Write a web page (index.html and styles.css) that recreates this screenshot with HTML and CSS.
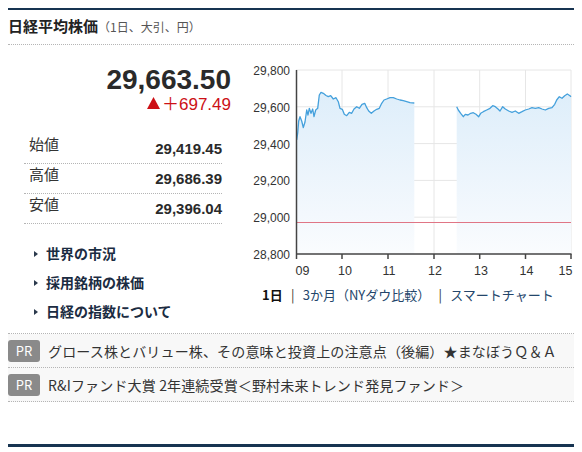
FILE: index.html
```html
<!DOCTYPE html>
<html lang="ja">
<head>
<meta charset="utf-8">
<title>日経平均株価</title>
<link rel="stylesheet" href="styles.css">
</head>
<body>
<section class="panel">
  <header class="head">
    <h2 class="title">日経平均株価</h2><span class="sub">（1日、大引、円）</span>
  </header>
  <div class="main">
    <div class="left">
      <div class="price">29,663.50</div>
      <div class="change"><svg class="up" width="13" height="12" viewBox="0 0 13 12" aria-label="上昇"><path d="M6.5 0 L13 12 L0 12 Z"/></svg>＋697.49</div>
      <dl class="ohl">
        <div class="row"><dt>始値</dt><dd>29,419.45</dd></div>
        <div class="row"><dt>高値</dt><dd>29,686.39</dd></div>
        <div class="row"><dt>安値</dt><dd>29,396.04</dd></div>
      </dl>
      <ul class="links">
        <li><a href="#">世界の市況</a></li>
        <li><a href="#">採用銘柄の株価</a></li>
        <li><a href="#">日経の指数について</a></li>
      </ul>
    </div>
    <div class="right">
      <svg class="chart" viewBox="240 45 336 235" width="336" height="235" xmlns="http://www.w3.org/2000/svg">
        <defs>
          <linearGradient id="fillg" x1="0" y1="0" x2="0" y2="1">
            <stop offset="0" stop-color="#deeefa"/>
            <stop offset="0.75" stop-color="#f3f8fd"/>
            <stop offset="1" stop-color="#fafcfe"/>
          </linearGradient>
        </defs>
        <g class="grid">
          <line x1="296" y1="70" x2="571" y2="70"/>
          <line x1="296" y1="106.8" x2="571" y2="106.8"/>
          <line x1="296" y1="143.6" x2="571" y2="143.6"/>
          <line x1="296" y1="180.4" x2="571" y2="180.4"/>
          <line x1="296" y1="217.2" x2="571" y2="217.2"/>
          <line x1="342" y1="70" x2="342" y2="254"/>
          <line x1="388" y1="70" x2="388" y2="254"/>
          <line x1="434" y1="70" x2="434" y2="254"/>
          <line x1="479.7" y1="70" x2="479.7" y2="254"/>
          <line x1="525.5" y1="70" x2="525.5" y2="254"/>
          <line x1="571" y1="70" x2="571" y2="254"/>
        </g>
        <path class="area" d="M296.7,254 L296.7,140 297.7,133 298.7,121 300,116.7 301.7,121 303.3,127.5 305,122 306.7,110 308,115 309.3,108.3 311,113.3 312.7,109 314,116.7 315.7,110 317.7,108.3 319.3,95 321,92.3 323.3,93.3 326,95.5 328.3,96.7 330.7,95.7 333.3,99 336,97.7 338.3,101.7 340,108.3 342.3,109.3 344.3,114.3 346.7,115.7 349.3,112.3 351.7,113.3 354,109 356.7,106.7 359.3,108.3 362,104.3 364.7,103.3 366.7,107.7 368.7,111 371.3,113.3 374,111 376.7,109.3 379.3,108.3 381.7,103.3 384,100 386.7,99 390,97.7 393.3,97.7 396.7,99 400,100 403.3,100.7 406.7,101.7 410,102.7 414.3,103 L414.3,254 Z"/>
        <path class="area" d="M456.7,254 L456.7,106.7 458.3,110 460.7,113.3 463.3,116.7 465.3,114.3 468,115 470.7,113.3 473.3,112.7 476,114.3 478.7,116.7 480.7,113.3 483.3,111.7 486.7,110 490,108.3 492.7,105.7 495.3,106.7 498,109 500,111 502.7,106.7 505.3,109 508.7,111 512,112.3 515.3,111 518.7,113.3 522,111.7 525.3,110 528.7,109 532,107.7 535.3,108.3 538.7,107.7 542,109 545.3,110 548.7,108.3 552,107.7 554.7,104.3 556.7,100 559.3,96.7 562,98.3 564.7,95.7 567.3,94 570,95.7 571,96.7 L571,254 Z"/>
        <line class="prev" x1="296" y1="222.5" x2="571" y2="222.5"/>
        <polyline class="line" points="296.7,140 297.7,133 298.7,121 300,116.7 301.7,121 303.3,127.5 305,122 306.7,110 308,115 309.3,108.3 311,113.3 312.7,109 314,116.7 315.7,110 317.7,108.3 319.3,95 321,92.3 323.3,93.3 326,95.5 328.3,96.7 330.7,95.7 333.3,99 336,97.7 338.3,101.7 340,108.3 342.3,109.3 344.3,114.3 346.7,115.7 349.3,112.3 351.7,113.3 354,109 356.7,106.7 359.3,108.3 362,104.3 364.7,103.3 366.7,107.7 368.7,111 371.3,113.3 374,111 376.7,109.3 379.3,108.3 381.7,103.3 384,100 386.7,99 390,97.7 393.3,97.7 396.7,99 400,100 403.3,100.7 406.7,101.7 410,102.7 414.3,103"/>
        <polyline class="line" points="456.7,106.7 458.3,110 460.7,113.3 463.3,116.7 465.3,114.3 468,115 470.7,113.3 473.3,112.7 476,114.3 478.7,116.7 480.7,113.3 483.3,111.7 486.7,110 490,108.3 492.7,105.7 495.3,106.7 498,109 500,111 502.7,106.7 505.3,109 508.7,111 512,112.3 515.3,111 518.7,113.3 522,111.7 525.3,110 528.7,109 532,107.7 535.3,108.3 538.7,107.7 542,109 545.3,110 548.7,108.3 552,107.7 554.7,104.3 556.7,100 559.3,96.7 562,98.3 564.7,95.7 567.3,94 570,95.7 571,96.7"/>
        <g class="axis">
          <line x1="296.5" y1="70" x2="296.5" y2="254"/>
          <line x1="296" y1="254" x2="571.5" y2="254"/>
          <line x1="296.5" y1="254" x2="296.5" y2="259"/>
          <line x1="342" y1="254" x2="342" y2="259"/>
          <line x1="388" y1="254" x2="388" y2="259"/>
          <line x1="434" y1="254" x2="434" y2="259"/>
          <line x1="479.7" y1="254" x2="479.7" y2="259"/>
          <line x1="525.5" y1="254" x2="525.5" y2="259"/>
          <line x1="571" y1="254" x2="571" y2="259"/>
        </g>
        <g class="ylab">
          <text x="290" y="75">29,800</text>
          <text x="290" y="111.8">29,600</text>
          <text x="290" y="148.6">29,400</text>
          <text x="290" y="185.4">29,200</text>
          <text x="290" y="222.2">29,000</text>
          <text x="290" y="259">28,800</text>
        </g>
        <g class="xlab">
          <text class="first" x="295.5" y="275">09</text>
          <text x="345" y="275">10</text>
          <text x="389" y="275">11</text>
          <text x="435" y="275">12</text>
          <text x="481" y="275">13</text>
          <text x="526.5" y="275">14</text>
          <text class="last" x="572.5" y="275">15</text>
        </g>
      </svg>
      <div class="tabs">
        <span class="cur">1日</span><span class="sep">|</span><a href="#">3か月（NYダウ比較）</a><span class="sep">|</span><a href="#">スマートチャート</a>
      </div>
    </div>
  </div>
  <ul class="pr">
    <li><span class="badge">PR</span><a href="#">グロース株とバリュー株、その意味と投資上の注意点（後編）★まなぼうＱ＆Ａ</a></li>
    <li><span class="badge">PR</span><a href="#">R&amp;Iファンド大賞 2年連続受賞＜野村未来トレンド発見ファンド＞</a></li>
  </ul>
</section>
</body>
</html>
```

FILE: styles.css
```css
html, body {
  background: #ffffff;
}
body {
  margin: 8px;
  font-family: "Noto Sans CJK JP", sans-serif;
  color: #333333;
}
a {
  text-decoration: none;
}
.panel {
  width: 568px;
  border-top: 2px solid #173451;
  border-bottom: 3px solid #173451;
  padding-bottom: 42px;
}
.head {
  display: flex;
  align-items: baseline;
  height: 34px;
  border-bottom: 1px dotted #b5b5b5;
  box-sizing: content-box;
}
.title {
  margin: 0;
  font-size: 15px;
  font-weight: 700;
  line-height: 31px;
  color: #222222;
}
.sub {
  font-size: 12px;
  color: #555555;
  line-height: 31px;
}
.main {
  display: flex;
}
.left {
  width: 232px;
}
.right {
  width: 336px;
}
.price {
  margin-top: 21px;
  padding-right: 9px;
  text-align: right;
  font-family: "Liberation Sans", Arial, sans-serif;
  font-weight: 700;
  font-size: 28px;
  line-height: 28px;
  color: #2a2a2a;
}
.change {
  margin-top: 1px;
  padding-right: 9px;
  text-align: right;
  font-family: "Liberation Sans", "Noto Sans CJK JP", sans-serif;
  font-size: 17px;
  line-height: 20px;
  height: 20px;
  color: #cc1016;
}
.change .up {
  fill: currentColor;
  vertical-align: 1px;
  margin-right: 2px;
}
.ohl {
  margin: 19px 0 0 16px;
  width: 198px;
}
.row {
  display: flex;
  justify-content: space-between;
  align-items: flex-start;
  height: 29px;
  border-bottom: 1px dotted #b5b5b5;
}
.row dt {
  padding-left: 5px;
  font-size: 15px;
  line-height: 20px;
  color: #333333;
}
.row dd {
  margin: 0;
  padding-top: 5px;
  font-family: "Liberation Sans", Arial, sans-serif;
  font-weight: 700;
  font-size: 15px;
  line-height: 20px;
  color: #2a2a2a;
}
.links {
  list-style: none;
  margin: 15px 0 7px 0;
  padding: 0 0 0 26px;
}
.links li {
  display: flex;
  align-items: center;
  height: 29px;
}
.links li::before {
  content: "";
  width: 0;
  height: 0;
  border-left: 4px solid #2b3a4d;
  border-top: 3.5px solid transparent;
  border-bottom: 3.5px solid transparent;
  margin-right: 8px;
}
.links a {
  font-size: 14px;
  font-weight: 700;
  color: #1b2c42;
  line-height: 29px;
}
.chart {
  display: block;
}
.grid line {
  stroke: #e6e6e6;
  stroke-width: 1;
}
.area {
  fill: url(#fillg);
  stroke: none;
}
.prev {
  stroke: #e07585;
  stroke-width: 1.2;
}
.line {
  fill: none;
  stroke: #44a0dc;
  stroke-width: 1.3;
  stroke-linejoin: round;
}
.axis line {
  stroke: #444444;
  stroke-width: 1.5;
}
.ylab text {
  font-family: "Liberation Sans", Arial, sans-serif;
  font-size: 12px;
  fill: #333333;
  text-anchor: end;
}
.xlab text {
  font-family: "Liberation Sans", Arial, sans-serif;
  font-size: 12.5px;
  fill: #333333;
  text-anchor: middle;
}
.xlab text.first {
  text-anchor: start;
}
.xlab text.last {
  text-anchor: end;
}
.tabs {
  display: flex;
  align-items: center;
  height: 28px;
  padding-left: 22px;
  font-size: 13px;
  white-space: nowrap;
}
.tabs .cur {
  font-weight: 700;
  color: #111111;
}
.tabs .sep {
  width: 20px;
  text-align: center;
  color: #333333;
}
.tabs a {
  color: #24466b;
}
.pr {
  list-style: none;
  margin: 0;
  padding: 0;
  border-top: 1px dotted #b5b5b5;
}
.pr li {
  display: flex;
  align-items: center;
  height: 33px;
  border-bottom: 1px dotted #b5b5b5;
  background: #f8f8f8;
}
.badge {
  width: 32px;
  height: 22px;
  border-radius: 3px;
  background: #8a8a8a;
  color: #ffffff;
  font-size: 13px;
  line-height: 22px;
  text-align: center;
  margin-right: 8px;
}
.pr a {
  font-size: 14px;
  letter-spacing: 0.15px;
  color: #333333;
  white-space: nowrap;
}
```
